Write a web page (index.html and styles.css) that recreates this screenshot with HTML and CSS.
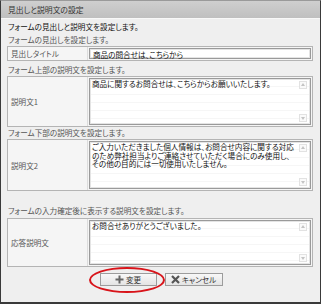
FILE: index.html
```html
<!DOCTYPE html>
<html lang="ja">
<head>
<meta charset="utf-8">
<link rel="stylesheet" href="styles.css">
</head>
<body>
<div class="panel">
  <div class="hdr">見出しと説明文の設定</div>
  <div class="content">
    <p class="lead">フォームの見出しと説明文を設定します。</p>
    <p class="note n1">フォームの見出しを設定します。</p>
    <div class="row r1">
      <div class="lbl">見出しタイトル</div>
      <div class="fld"><div class="input">商品の問合せは、こちらから</div></div>
    </div>
    <p class="note n2">フォーム上部の説明文を設定します。</p>
    <div class="row r2">
      <div class="lbl">説明文1</div>
      <div class="fld"><div class="area">商品に関するお問合せは、こちらからお願いいたします。<span class="sb up"></span><span class="sb dn"></span></div></div>
    </div>
    <p class="note n3">フォーム下部の説明文を設定します。</p>
    <div class="row r3">
      <div class="lbl">説明文2</div>
      <div class="fld"><div class="area">ご入力いただきました個人情報は、お問合せ内容に関する対応のため弊社担当よりご連絡させていただく場合にのみ使用し、その他の目的には一切使用いたしません。<span class="sb up"></span><span class="sb dn"></span></div></div>
    </div>
    <p class="note n4">フォームの入力確定後に表示する説明文を設定します。</p>
    <div class="row r4">
      <div class="lbl">応答説明文</div>
      <div class="fld"><div class="area">お問合せありがとうございました。<span class="sb up"></span><span class="sb dn"></span></div></div>
    </div>
    <div class="actions">
      <div class="btnwrap">
        <button class="btn ok"><svg class="ic" width="9" height="9" viewBox="0 0 9 9"><path d="M4.5 0.5v8M0.5 4.5h8" stroke="#666" stroke-width="2"/></svg>変更</button>
        <span class="ring"></span>
      </div>
      <button class="btn cancel"><svg class="ic" width="9" height="9" viewBox="0 0 9 9"><path d="M1 1l7 7M8 1l-7 7" stroke="#555" stroke-width="2.2"/></svg>キャンセル</button>
    </div>
  </div>
</div>
</body>
</html>
```
FILE: styles.css
```css
html, body {
  margin: 0;
  padding: 0;
  background: #ffffff;
}
body {
  font-family: "Noto Sans CJK JP", "Noto Sans", sans-serif;
  font-size: 7.6px;
  font-feature-settings: "palt";
  color: #222;
}
.panel {
  width: 319px;
  height: 301px;
  border: 1px solid #3a3a3a;
  border-top-color: #9a9a9a;
  border-bottom-width: 2px;
  background: #efefef;
  display: flex;
  flex-direction: column;
}
.hdr {
  height: 17px;
  line-height: 17px;
  padding-left: 7px;
  background: linear-gradient(#cfcfcf, #bfbfbf);
  border-bottom: 1px solid #f8f8f8;
  color: #333;
  font-size: 7.8px;
}
.content {
  padding: 2px 7px 0 6px;
  display: flex;
  flex-direction: column;
}
.lead, .note {
  margin: 0;
  height: 12px;
  line-height: 12px;
  padding-left: 1px;
}
.lead { color: #111; }
.note { color: #555; }
.n1 { margin-top: 1px; }
.n2 { margin-top: 3px; }
.n3 { margin-top: 0; }
.n4 { margin-top: 14px; }
.row {
  display: flex;
  border: 1px solid #b4b4b4;
  background: #f5f5f5;
}
.r1 { height: 13px; }
.r2 { height: 49px; }
.r3 { height: 50px; }
.r4 { height: 47px; margin-top: 1px; }
.lbl {
  width: 80px;
  display: flex;
  align-items: center;
  padding-left: 3px;
  box-sizing: border-box;
  color: #555;
  border-right: 1px solid #dcdcdc;
}
.fld {
  flex: 1;
  display: flex;
  padding: 1px;
}
.input, .area {
  flex: 1;
  background: #fff;
  border: 1px solid #9a9a9a;
  box-shadow: inset 0 0 0 1px #e4e4e4;
  color: #111;
  padding: 0 3px;
  position: relative;
}
.input {
  line-height: 11px;
}
.area {
  line-height: 8.6px;
  padding: 1px 14px 0 2px;
  background:
    repeating-linear-gradient(to bottom, transparent 0 7px, #f6f6f6 7px 8px),
    #fff;
}
.sb {
  position: absolute;
  right: 3px;
  width: 6px;
  height: 6px;
  border: 1px solid #e2e2e2;
  background: #fafafa;
}
.sb::after {
  content: "";
  position: absolute;
  left: 1px;
  border-left: 2px solid transparent;
  border-right: 2px solid transparent;
}
.sb.up { top: 2px; }
.sb.up::after { top: 1px; border-bottom: 3px solid #c4c4c4; }
.sb.dn { bottom: 2px; }
.sb.dn::after { top: 2px; border-top: 3px solid #c4c4c4; }
.actions {
  display: flex;
  justify-content: center;
  gap: 8px;
  margin-top: 6px;
  padding-left: 2px;
}
.btnwrap {
  position: relative;
  display: flex;
}
.btn {
  font: inherit;
  font-size: 7.6px;
  height: 13px;
  padding: 0;
  display: flex;
  align-items: center;
  justify-content: center;
  gap: 2px;
  background: linear-gradient(#f8f8f8, #e4e4e4);
  border: 1px solid #9c9c9c;
  color: #333;
  line-height: 1;
}
.btn.ok { width: 57px; }
.btn.cancel { width: 58px; }
.ic { display: block; }
.ring {
  position: absolute;
  left: -11px;
  top: -6px;
  width: 76px;
  height: 26px;
  border: 2px solid #d8141a;
  border-radius: 50%;
  box-sizing: border-box;
}
```
